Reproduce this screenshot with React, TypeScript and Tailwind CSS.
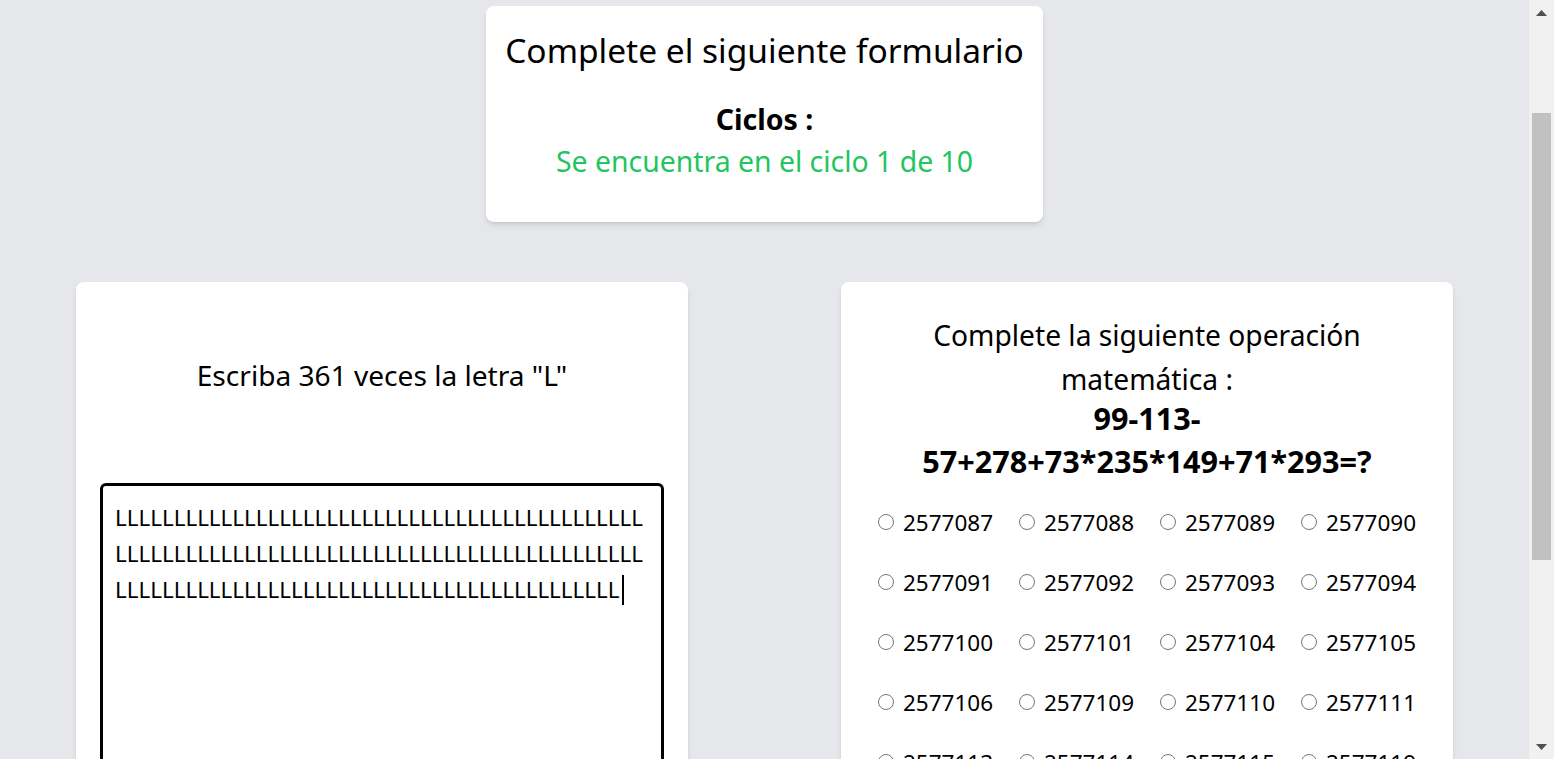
import React from "react";

const options = [
  "2577087", "2577088", "2577089", "2577090",
  "2577091", "2577092", "2577093", "2577094",
  "2577100", "2577101", "2577104", "2577105",
  "2577106", "2577109", "2577110", "2577111",
  "2577113", "2577114", "2577115", "2577119",
];

const L45 = "L".repeat(45);
const L43 = "L".repeat(43);

function Scrollbar() {
  return (
    <div className="relative flex h-full w-[25px] shrink-0 flex-col bg-[#f1f1f1]">
      <div className="flex h-[25px] items-center justify-center">
        <svg width="11" height="6" viewBox="0 0 11 6">
          <polygon points="5.5,0 11,6 0,6" fill="#505050" />
        </svg>
      </div>
      <div className="absolute left-[3px] top-[113px] h-[447px] w-[19px] bg-[#c1c1c1]" />
      <div className="mt-auto flex h-[25px] items-center justify-center">
        <svg width="11" height="6" viewBox="0 0 11 6">
          <polygon points="0,0 11,0 5.5,6" fill="#505050" />
        </svg>
      </div>
    </div>
  );
}

export default function App() {
  return (
    <div className="flex h-[759px] w-full overflow-hidden bg-[#e5e7eb] font-['Noto_Sans',sans-serif] text-black">
      <main className="flex min-w-0 flex-1 flex-col items-center">
        <section className="mt-[6px] flex h-[216px] w-[557px] shrink-0 flex-col items-center rounded-lg bg-white pt-[24px] shadow-md">
          <h1 className="text-[33.5px] leading-[40px] font-normal">Complete el siguiente formulario</h1>
          <p className="mt-[31px] text-[28.5px] leading-[36px] font-bold">Ciclos :</p>
          <p className="mt-[6px] text-[28.4px] leading-[36px] text-[#22c55e]">Se encuentra en el ciclo 1 de 10</p>
        </section>

        <div className="mt-[60px] grid w-full grid-cols-2 gap-[153px] px-[76px]">
          <section className="flex h-[700px] flex-col rounded-lg bg-white pt-[73px] shadow-md">
            <p className="text-center text-[28.1px] leading-[40px]">Escriba 361 veces la letra "L"</p>
            <div className="mx-[24px] mt-[88px] h-[320px] rounded-md border-[3px] border-black pl-[12px] pt-[14px] text-[22.4px] leading-[36px] whitespace-pre">
              <div>{L45}</div>
              <div>{L45}</div>
              <div className="flex items-center">
                <span>{L43}</span>
                <span className="ml-[2px] inline-block h-[30px] w-[2px] bg-black" />
              </div>
            </div>
          </section>

          <section className="flex h-[700px] flex-col rounded-lg bg-white pt-[31px] shadow-md">
            <div className="text-center text-[28.2px] leading-[44px]">
              <div>Complete la siguiente operación</div>
              <div>matemática :</div>
            </div>
            <div className="mt-[-4px] text-center text-[30.6px] leading-[43px] font-bold">
              <div>99-113-</div>
              <div>57+278+73*235*149+71*293=?</div>
            </div>
            <div className="mt-[10px] grid grid-cols-[141px_141px_141px_141px] pl-[37px]">
              {options.map((o) => (
                <label key={o} className="flex h-[60px] items-center gap-[9px] text-[22.5px]">
                  <span className="mt-[-2px] inline-block h-[16px] w-[16px] shrink-0 rounded-full border border-[#767676] bg-white" />
                  <span>{o}</span>
                </label>
              ))}
            </div>
          </section>
        </div>
      </main>
      <Scrollbar />
    </div>
  );
}
